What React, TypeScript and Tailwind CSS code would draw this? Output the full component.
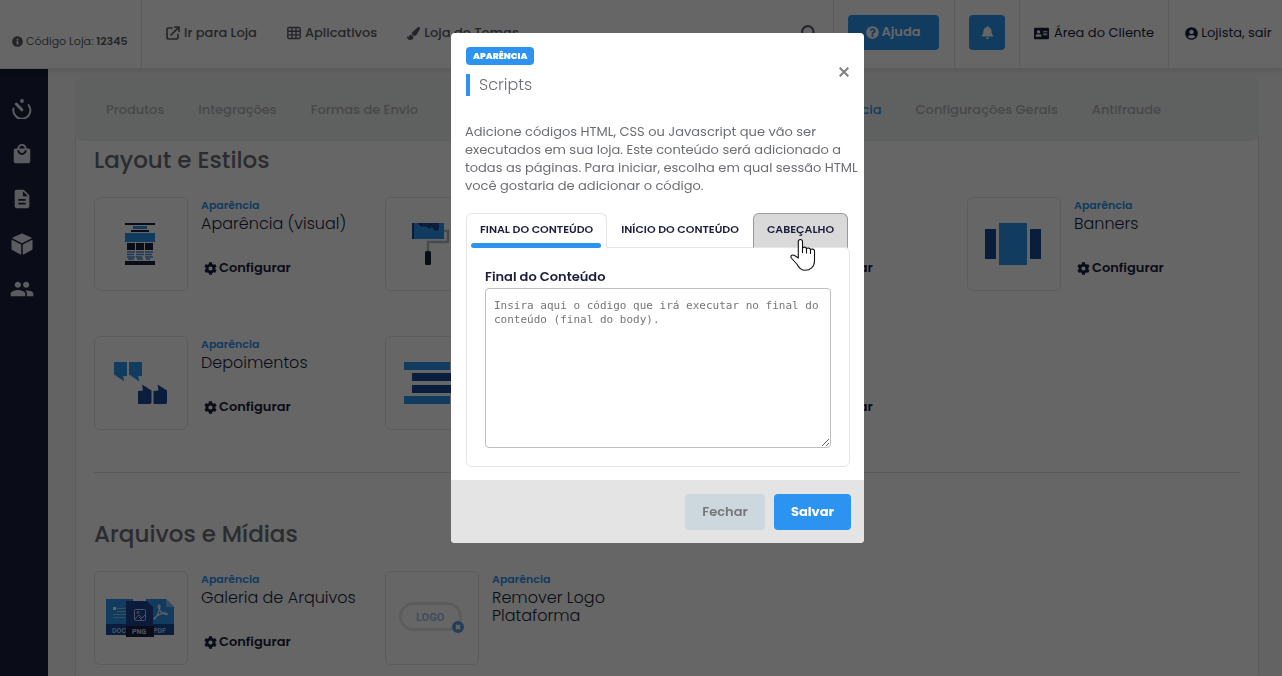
import React, { useState } from 'react';
import { FaAddressCard, FaBell, FaCog, FaInfoCircle, FaPaintBrush, FaQuestionCircle, FaUserCircle } from 'react-icons/fa';
import { IoMdCube, IoMdPeople } from 'react-icons/io';
import { MdDescription, MdLocalMall } from 'react-icons/md';
import { FiSearch } from 'react-icons/fi';

interface CardItem {
  title: string;
  art: React.ReactNode;
  configurable: boolean;
}

const TimerIcon = () => (
  <svg width="20" height="20" viewBox="0 0 20 20" fill="none" stroke="currentColor" strokeWidth="2" strokeLinecap="round">
    <path d="M1.500 9.500a8.500 8.500 0 1 0 15-3.500" />
    <path d="M4.300 5l5.500 5.800" strokeWidth="3" />
    <circle cx="10" cy="2" r="1.900" fill="currentColor" stroke="none" />
  </svg>
);

const ExternalIcon = () => (
  <svg width="14" height="14" viewBox="0 0 14 14" fill="none" stroke="currentColor" strokeWidth="1.700" strokeLinecap="round" strokeLinejoin="round">
    <path d="M6 2H2.400A1.400 1.400 0 0 0 1 3.400v8.200A1.400 1.400 0 0 0 2.400 13h8.200a1.400 1.400 0 0 0 1.400-1.400V8.500" />
    <path d="M5 9l7.500-7.700M8.700 1h4.300v4.300" />
  </svg>
);

const GridIcon = () => (
  <svg width="14" height="14" viewBox="0 0 14 14" fill="none" stroke="currentColor" strokeWidth="1.400">
    <rect x="0.800" y="1.500" width="12.400" height="11" rx="1.200" />
    <path d="M1 5.200h12M1 8.900h12M5 1.500v11M9 1.500v11" />
  </svg>
);

const LayoutArt = () => (
  <svg width="32" height="42" viewBox="0 0 32 42">
    <path fill="#1b1f3d" d="M0 0h30v2H0zM6 7h18v2H6zM0 38h30v4H0zM2 20h8v7H2zM11 20h8v7h-8zM20 20h8v7h-8z" />
    <path fill="#2d93f0" d="M8 3h14v3H8zM0 10h30v9H0z" />
    <path stroke="#4b8fdc" strokeWidth="1.300" d="M2 29h8M11 29h8M20 29h8M2 31.500h7M11 31.500h8M20 31.500h7M2 34h8M11 34h6M20 34h8M3 36h6M12 36h6M21 36h4" />
  </svg>
);

const RollerArt = () => (
  <svg width="40" height="42" viewBox="0 0 40 42" fill="none">
    <path d="M31 8h5v11H16v9" stroke="#b4b8c4" strokeWidth="2.500" />
    <path fill="#2d93f0" d="M0 0h32v16H0z" />
    <path fill="#1c4a94" d="M0 0h2v16H0zM6 0h21v5c0 4-5 4-6 0-1-2-4 2-6-1-2-2-7 2-9-4z" />
    <rect x="13" y="28" width="6" height="14" rx="1.500" fill="#1b1f3d" />
  </svg>
);

const QuotesArt = () => (
  <svg width="56" height="42" viewBox="0 0 56 42">
    <path fill="#2d93f0" d="M1 0h13v14l-4 .300 1.500 5.200L1 12.500zM16 0h13v14l-4 .300 1.500 5.200L16 12.500z" />
    <path fill="#1c4a9a" d="M25 41V29l5-.500-1-6 9.500 6V40q0 2-1.500 2H26q-1 0-1-1zM40.500 41V29l5-.500-1-6 9.500 6V40q0 2-1.500 2h-11q-1 0-1-1z" />
  </svg>
);

const RowsArt = () => (
  <svg width="57" height="42" viewBox="0 0 57 42">
    <path fill="#2d93f0" d="M0 0h46v8H0zM0 34h46v8H0z" />
    <path fill="#1c4a9a" d="M8 11h47v8H8zM8 23h47v8H8z" />
  </svg>
);

const BannersArt = () => (
  <svg width="58" height="42" viewBox="0 0 58 42">
    <path fill="#1c4a9a" d="M0 6h11v30H0zM45 6h11v30H45z" />
    <path fill="#2d93f0" d="M14 0h28v42H14z" />
  </svg>
);

const FilesArt = () => (
  <svg width="70" height="38" viewBox="0 0 70 38" fontFamily="Roboto, sans-serif" fontSize="7" fontWeight="700">
    <path fill="#2d93f0" d="M0 0h27v26H0zM40 0h20l8 8v18H40z" />
    <path fill="#7fbdf7" d="M60 0l8 8h-8z" />
    <path fill="#1c4a9a" d="M0 25h27v11H0zM42 25h26v11H42z" />
    <path stroke="#8dc0f5" strokeWidth="1" d="M11 9.500h9M11 12.500h9M7 15.500h13M7 18.500h13" />
    <path fill="#fff" d="M7 8h3v3H7z" />
    <path fill="none" stroke="#e6f1fd" strokeWidth="1.300" d="M53 6c-2 2 1 7 5 9 5 2 4-2-1-1-4 1-9 5-9 6 1 1 6-8 6-13z" />
    <text x="6" y="33.500" fill="#b8cbe8">DOC</text>
    <text x="47" y="33.500" fill="#b8cbe8">PDF</text>
    <path fill="#1e4596" d="M20 2h21l6 6v20H20z" />
    <path fill="#1b1f3d" d="M20 27h28v11H20z" />
    <g fill="none" stroke="#b8cbe8" strokeWidth="1">
      <rect x="28.500" y="10.500" width="11" height="11" rx="1" />
      <path d="M29 20l4-4 3 3 3-3M36 21l-3-3" />
      <circle cx="32" cy="13.500" r="1" />
    </g>
    <text x="26" y="35" fill="#d5d8e4">PNG</text>
  </svg>
);

const LogoArt = () => (
  <svg width="66" height="32" viewBox="0 0 66 32">
    <rect x="1.500" y="1.500" width="60" height="26" rx="13" fill="none" stroke="#e4e7ea" strokeWidth="3" />
    <text x="17" y="18.500" fill="#9cc3ec" fontFamily="Roboto, sans-serif" fontSize="11" fontWeight="700">LOGO</text>
    <circle cx="59" cy="25" r="6" fill="#5d9ad9" />
    <path d="M57 23l4 4M61 23l-4 4" stroke="#fff" strokeWidth="1.800" />
  </svg>
);

const layoutCards: CardItem[] = [
  { title: 'Aparência (visual)', art: <LayoutArt />, configurable: true },
  { title: 'Cores', art: <RollerArt />, configurable: true },
  { title: 'Scripts', art: <LayoutArt />, configurable: true },
  { title: 'Banners', art: <BannersArt />, configurable: true },
  { title: 'Depoimentos', art: <QuotesArt />, configurable: true },
  { title: 'Menu', art: <RowsArt />, configurable: true },
  { title: 'Rodapé', art: <RowsArt />, configurable: true },
];

const fileCards: CardItem[] = [
  { title: 'Galeria de Arquivos', art: <FilesArt />, configurable: true },
  { title: 'Remover Logo Plataforma', art: <LogoArt />, configurable: false },
];

const scriptTabs = [
  { id: 'end', label: 'Final do Conteúdo', placeholder: 'Insira aqui o código que irá executar no final do conteúdo (final do body).' },
  { id: 'start', label: 'Início do Conteúdo', placeholder: 'Insira aqui o código que irá executar no início do conteúdo (início do body).' },
  { id: 'head', label: 'Cabeçalho', placeholder: 'Insira aqui o código que irá executar no cabeçalho (head).' },
];

const Card: React.FC<{ item: CardItem }> = ({ item }) => (
  <div className="flex gap-[13px]">
    <div className="w-[94px] h-[94px] shrink-0 border border-[#e3e5e8] rounded-md flex items-center justify-center">
      {item.art}
    </div>
    <div className="flex flex-col items-start min-w-0">
      <span className="text-[11px] leading-4 font-semibold text-[#2d93f0]">Aparência</span>
      <h3 className="mt-[2px] text-[16px] leading-[18px] font-light text-[#1b1f3d]">{item.title}</h3>
      {item.configurable && (
        <button className="mt-auto mb-[11px] ml-[3px] flex items-center gap-[2px] text-[13px] leading-6 font-semibold text-[#1b1f3d] cursor-pointer">
          <FaCog /> Configurar
        </button>
      )}
    </div>
  </div>
);

const Header = () => (
  <header className="relative h-[69px] flex items-stretch bg-white border-b border-[#e6e6e6] shadow-[0_2px_6px_rgba(0,0,0,0.1)] text-[13px]">
    <div className="w-[142px] shrink-0 border-r border-[#e6e6e6] pt-[14px] flex items-center gap-[3px] pl-3 text-[11px] text-[#5c5e66]">
      <FaInfoCircle /> <span>Código Loja: <b className="font-semibold">12345</b></span>
    </div>
    <nav className="flex items-center gap-[30px] pl-6 pb-[2px] font-medium text-[#5c5e66]">
      <a href="#loja" className="flex items-center gap-1"><ExternalIcon /> Ir para Loja</a>
      <a href="#aplicativos" className="flex items-center gap-1"><GridIcon /> Aplicativos</a>
      <a href="#temas" className="flex items-center gap-1"><FaPaintBrush /> Loja de Temas</a>
    </nav>
    <div className="ml-auto flex items-stretch text-[#1b1f3d]">
      <button aria-label="Buscar" className="px-4 pb-1 text-[#5c5e66]"><FiSearch size={17} strokeWidth={3} /></button>
      <div className="border-l border-[#e6e6e6] pl-[14px] pr-[15px] pb-1 flex items-center">
        <button className="h-[35px] w-[91px] rounded bg-[#2d93f0] text-white font-semibold flex items-center justify-center gap-[2px]">
          <FaQuestionCircle /> Ajuda
        </button>
      </div>
      <div className="border-l border-[#e6e6e6] px-[14px] pb-1 flex items-center">
        <button aria-label="Notificações" className="h-[35px] w-9 rounded bg-[#2d93f0] text-white flex items-center justify-center">
          <FaBell />
        </button>
      </div>
      <a href="#cliente" className="border-l border-[#e6e6e6] w-[149px] pb-[2px] flex items-center justify-center gap-[5px]">
        <FaAddressCard size={15} /> Área do Cliente
      </a>
      <a href="#sair" className="border-l border-[#e6e6e6] w-[114px] pl-[6px] pb-[2px] flex items-center justify-center gap-[3px]">
        <FaUserCircle /> Lojista, sair
      </a>
    </div>
  </header>
);

const Sidebar = () => (
  <aside className="w-12 shrink-0 bg-[#191e3c] text-[#e4e6ee] pt-[17px] pr-[5px] flex flex-col items-center">
    <a href="#painel" aria-label="Painel" className="h-[45px] flex items-center"><TimerIcon /></a>
    <a href="#pedidos" aria-label="Pedidos" className="h-[45px] flex items-center"><MdLocalMall size={22} /></a>
    <a href="#paginas" aria-label="Páginas" className="h-[45px] flex items-center"><MdDescription size={22} /></a>
    <a href="#produtos" aria-label="Produtos" className="h-[45px] flex items-center"><IoMdCube size={24} /></a>
    <a href="#clientes" aria-label="Clientes" className="h-[45px] flex items-center"><IoMdPeople size={26} /></a>
  </aside>
);

const ScriptsModal = () => {
  const [active, setActive] = useState('end');
  const [hovered, setHovered] = useState('head');
  const current = scriptTabs.find(t => t.id === active)!;

  return (
    <div className="fixed inset-0 bg-black/60 flex items-start justify-center pt-[33px] pl-[33px]">
      <div role="dialog" aria-label="Scripts" className="w-[413px] bg-white rounded overflow-hidden">
        <div className="px-[15px] pt-[14px] flex justify-between items-center">
          <div>
            <span className="block w-fit bg-[#2d93f0] text-white text-[9px] leading-[18px] font-black px-[7px] rounded">APARÊNCIA</span>
            <h2 className="mt-[9px] border-l-4 border-[#2d93f0] pl-[9px] text-[16px] leading-[22px] font-light text-[#6c6e75]">Scripts</h2>
          </div>
          <button aria-label="Fechar janela" className="text-[#808080] cursor-pointer">
            <svg width="10" height="10" viewBox="0 0 10 10" stroke="currentColor" strokeWidth="2"><path d="M0.700 0.700l8.600 8.600M9.300 0.700L0.700 9.300" /></svg>
          </button>
        </div>

        <p className="pl-[14px] pr-1 pt-[27px] text-[13px] leading-[18px] text-[#6c6e75]">
          Adicione códigos HTML, CSS ou Javascript que vão ser executados em sua loja. Este conteúdo será adicionado a todas as páginas. Para iniciar, escolha em qual sessão HTML você gostaria de adicionar o código.
        </p>

        <div className="pl-[15px] pr-[14px] pt-[18px] pb-[13px]">
          <div role="tablist" className="relative flex h-[35px] text-[11px] font-semibold text-[#1b1f3d]">
            {scriptTabs.map(tab => (
              <button
                key={tab.id}
                role="tab"
                aria-selected={tab.id === active}
                onClick={() => setActive(tab.id)}
                onMouseEnter={() => setHovered(tab.id)}
                className={`
                  relative px-[13px] pb-[2px] rounded-t-md border whitespace-nowrap uppercase
                  ${tab.id === active
                    ? 'bg-white border-[#e4e6e6] border-b-white'
                    : tab.id === hovered
                      ? 'bg-[#d9d9d9] border-[#999] border-b-[#e4e6e6]'
                      : 'border-transparent border-b-[#e4e6e6]'
                  }
                `}
              >
                {tab.label}
                {tab.id === active && <span className="absolute left-1 right-[5px] bottom-[-1px] h-[5px] rounded-full bg-[#2d93f0]" />}
              </button>
            ))}
            {/* Hand pointer over the hovered tab */}
            <svg className="absolute right-[34px] top-[26px] pointer-events-none" width="26" height="32" viewBox="0 0 26 32">
              <path
                d="M8.300 19V2.800c0-3 4.200-3 4.200 0v6.500c.800-1.800 4-1.500 4 .700.800-1.500 4-1.200 4 .800.800-1.200 4-1 4 1.200v10c0 6-4.500 9.300-9.500 9.300-4.500 0-6.500-3-8.200-6.300L1.300 19c-1.300-2.500 1.500-4 3.700-2.200z"
                fill="#fff" stroke="#111" strokeWidth="1.100" strokeLinejoin="round"
              />
              <path d="M12.500 9v5M16.500 10v4.500M20.500 10.500V15" stroke="#111" strokeWidth="1.100" />
            </svg>
          </div>

          <div className="-mt-px border border-[#e4e6e6] rounded-md rounded-tl-none px-[18px] pt-[19px] pb-[18px] flex flex-col">
            <label htmlFor="script" className="pb-px text-[13px] leading-5 font-semibold text-[#1b1f3d]">{current.label}</label>
            <textarea
              id="script"
              placeholder={current.placeholder}
              className="h-40 border border-[#bfbfbf] rounded px-2 py-[10px] text-[11px] leading-[14px] font-['DejaVu_Sans_Mono',monospace] placeholder:text-[#757575] resize"
            />
          </div>
        </div>

        <div className="bg-[#e4e4e4] px-[13px] pt-[14px] pb-[13px] flex justify-end gap-[9px] text-[13px]">
          <button className="h-9 w-20 rounded bg-[#cdd7de] text-[#76777b] font-semibold cursor-pointer">Fechar</button>
          <button className="h-9 w-[77px] rounded bg-[#2d93f0] text-white font-bold cursor-pointer">Salvar</button>
        </div>
      </div>
    </div>
  );
};

export default function App() {
  return (
    <div className="h-screen overflow-hidden flex flex-col bg-[#f7f7f7] font-['Poppins','Inter',sans-serif]">
      <Header />
      <div className="flex-1 min-h-0 flex">
        <Sidebar />
        <main className="flex-1 min-w-0 pl-[27px] pr-[23px] pt-[9px]">
          <div className="h-full bg-white border-x border-[#e3e3e3] rounded-t-lg">
            <nav className="h-[63px] -mx-px rounded-lg bg-[#eef3f1] pl-[31px] pr-[98px] flex items-center justify-between text-[13px] font-medium text-[#b4b2b6]">
              <div className="flex gap-[34px]">
                <a href="#produtos">Produtos</a>
                <a href="#integracoes">Integrações</a>
                <a href="#envio">Formas de Envio</a>
              </div>
              <div className="flex gap-[34px]">
                <a href="#aparencia" className="text-[#2d93f0]">Aparência</a>
                <a href="#gerais">Configurações Gerais</a>
                <a href="#antifraude">Antifraude</a>
              </div>
            </nav>
            <div className="px-[18px]">
              <h2 className="pt-[2px] text-[23px] leading-[34px] font-medium text-[#6c6e75]">Layout e Estilos</h2>
              <div className="mt-5 grid grid-cols-4 gap-x-[18px] gap-y-[45px]">
                {layoutCards.map(item => <Card key={item.title} item={item} />)}
              </div>
              <hr className="mt-[42px] border-[#e0e0e0]" />
              <h2 className="mt-11 text-[23px] leading-[34px] font-medium text-[#6c6e75]">Arquivos e Mídias</h2>
              <div className="mt-5 grid grid-cols-4 gap-x-[18px]">
                {fileCards.map(item => <Card key={item.title} item={item} />)}
              </div>
            </div>
          </div>
        </main>
      </div>
      <ScriptsModal />
    </div>
  );
}
